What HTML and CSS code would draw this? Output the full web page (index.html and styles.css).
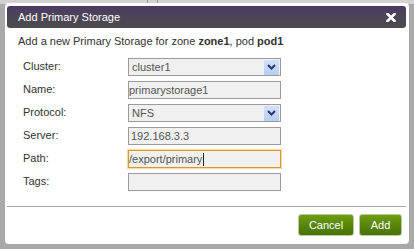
FILE: index.html
```html
<!DOCTYPE html>
<html>
<head>
<meta charset="utf-8">
<link rel="stylesheet" href="styles.css">
</head>
<body>
<div class="page">
  <div class="page-top"><span class="tab-line"></span><span class="tab-line second"></span></div>
</div>
<div class="dialog">
  <div class="dialog-header">
    <span class="dialog-title">Add Primary Storage</span>
    <svg class="close-icon" width="10" height="9" viewBox="0 0 10 9"><path d="M1.5 1 L8.5 8 M8.5 1 L1.5 8" stroke="#fff" stroke-width="2.6" stroke-linecap="square"/></svg>
  </div>
  <div class="dialog-body">
    <p class="intro">Add a new Primary Storage for zone <b>zone1</b>, pod <b>pod1</b></p>
    <div class="form">
      <label class="form-label">Cluster:</label>
      <div class="field select"><span class="field-text">cluster1</span><span class="select-btn"><svg width="9" height="6" viewBox="0 0 9 6"><path d="M1 1 L4.5 4.5 L8 1" fill="none" stroke="#28366a" stroke-width="2"/></svg></span></div>
      <label class="form-label">Name:</label>
      <div class="field text"><span class="field-text">primarystorage1</span></div>
      <label class="form-label">Protocol:</label>
      <div class="field select"><span class="field-text">NFS</span><span class="select-btn"><svg width="9" height="6" viewBox="0 0 9 6"><path d="M1 1 L4.5 4.5 L8 1" fill="none" stroke="#28366a" stroke-width="2"/></svg></span></div>
      <label class="form-label">Server:</label>
      <div class="field text"><span class="field-text pad">192.168.3.3</span></div>
      <label class="form-label">Path:</label>
      <div class="field text focused"><span class="field-text">/export/primary</span><span class="caret"></span></div>
      <label class="form-label">Tags:</label>
      <div class="field text"></div>
    </div>
  </div>
  <div class="dialog-footer">
    <button class="btn btn-cancel">Cancel</button>
    <button class="btn btn-add">Add</button>
  </div>
</div>
</body>
</html>
```

FILE: styles.css
```css
html, body {
  margin: 0;
  padding: 0;
}
body {
  width: 414px;
  height: 249px;
  background: #a9a9a9;
  position: relative;
  overflow: hidden;
  font-family: "Liberation Sans", Arial, sans-serif;
  font-size: 11px;
}
.page {
  height: 249px;
  display: flex;
  flex-direction: column;
}
.page-top {
  height: 4px;
  background: #d2d2d2;
  position: relative;
}
.tab-line {
  position: absolute;
  left: 147px;
  top: 0;
  width: 1px;
  height: 4px;
  background: #9a9a9a;
}
.tab-line.second {
  left: 157px;
}
.dialog {
  position: absolute;
  left: 5px;
  top: 3px;
  width: 404px;
  height: 241px;
  box-sizing: border-box;
  background: #fff;
  border-radius: 4px;
  padding: 3px 3px 0 2px;
  display: flex;
  flex-direction: column;
}
.dialog-header {
  height: 22px;
  border-radius: 3px;
  background: linear-gradient(#4a3b63, #4d4656 55%, #4b4b4b);
  display: flex;
  align-items: center;
  justify-content: space-between;
  padding: 0 10px 0 11px;
}
.dialog-title {
  color: #fff;
  font-size: 11px;
}
.close-icon {
  display: block;
  margin-top: 1px;
}
.dialog-body {
  padding: 0 0 0 11px;
}
.intro {
  margin: 6px 0 0;
  line-height: 14px;
  color: #333;
}
.intro b {
  color: #333;
}
.form {
  display: grid;
  grid-template-columns: 105px 153px;
  grid-auto-rows: 18px;
  row-gap: 5px;
  margin-top: 10px;
  padding-left: 5px;
}
.form-label {
  color: #333;
  line-height: 16px;
}
.field {
  box-sizing: border-box;
  border: 1px solid #9b9b9b;
  background: #f1f0f0;
  display: flex;
  align-items: center;
  color: #555;
  height: 18px;
}
.field-text {
  line-height: 16px;
}
.select .field-text {
  padding-left: 3px;
  flex: 1;
}
.field-text.pad {
  padding-left: 2px;
}
.select-btn {
  width: 15px;
  height: 15px;
  margin-right: 1px;
  background: linear-gradient(#d3e1fb, #b7cdf5);
  border-radius: 1px;
  display: flex;
  align-items: center;
  justify-content: center;
}
.select-btn svg {
  display: block;
}
.focused {
  border-color: #d9982e;
  box-shadow: 0 0 1px 1px rgba(244, 190, 100, 0.55);
}
.caret {
  width: 1px;
  height: 13px;
  background: #222;
  margin-left: 1px;
}
.dialog-footer {
  margin-top: auto;
  border-top: 1px solid #a9a9a9;
  margin-bottom: 8px;
  padding: 7px 4px 0 0;
  display: flex;
  justify-content: flex-end;
  gap: 5px;
}
.btn {
  height: 22px;
  box-sizing: border-box;
  border: 1px solid #b9c7a6;
  border-radius: 3px;
  background: linear-gradient(#6f9e0e, #58860a 50%, #4a7205);
  color: #fff;
  font-family: "Liberation Sans", Arial, sans-serif;
  font-size: 11px;
  padding: 0;
  cursor: pointer;
}
.btn-cancel {
  width: 56px;
}
.btn-add {
  width: 43px;
}
```
